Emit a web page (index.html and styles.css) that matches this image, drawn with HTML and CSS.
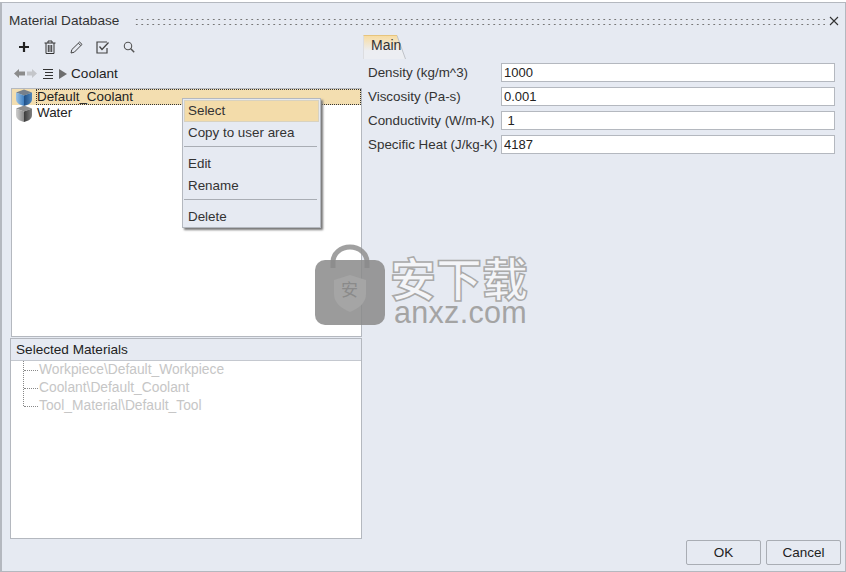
FILE: index.html
```html
<!DOCTYPE html>
<html lang="en">
<head>
  <meta charset="UTF-8" />
  <title>Material Database</title>
  <link rel="stylesheet" href="styles.css">
</head>
<body>
<div class="dialog">
  <div class="titlebar">
    <span class="title">Material Database</span>
    <span class="grip"></span>
    <svg class="close" width="10" height="10" viewBox="0 0 10 10"><path d="M1 1l8 8M9 1l-8 8" stroke="#333" stroke-width="1.1" fill="none"/></svg>
  </div>

  <div class="main">
    <div class="left">
      <div class="toolbar">
        <svg width="12" height="12" viewBox="0 0 12 12"><path d="M6 1v10M1 6h10" stroke="#222" stroke-width="2.2" fill="none"/></svg>
        <svg width="12" height="14" viewBox="0 0 12 14"><path d="M0.5 3h11M4 3V1h4v2M2 3v10.5h8V3M4.3 5v7M6 5v7M7.7 5v7" stroke="#333" stroke-width="1" fill="none"/></svg>
        <svg width="13" height="13" viewBox="0 0 13 13"><path d="M1 12l.8-3.4L9.6 1l2.4 2.4-7.7 7.8zM8.4 2.2l2.4 2.4" stroke="#444" stroke-width="1" fill="none"/></svg>
        <svg class="tool-check" width="14" height="13" viewBox="0 0 14 13"><path d="M11 7v5H1V1h10" stroke="#444" stroke-width="1.2" fill="none"/><path d="M3.5 5.5L6 8.5l6.5-7" stroke="#444" stroke-width="1.3" fill="none"/></svg>
        <svg width="12" height="12" viewBox="0 0 12 12"><circle cx="5" cy="5" r="3.7" stroke="#555" stroke-width="1.1" fill="none"/><path d="M7.8 7.8l3.4 3.4" stroke="#555" stroke-width="1.5"/></svg>
      </div>

      <div class="crumbs">
        <svg width="11" height="9" viewBox="0 0 11 9"><path d="M0 4.5L5 0v2.5h6v4H5V9z" fill="#8b8b8b"/></svg>
        <svg class="crumb-fwd" width="10" height="9" viewBox="0 0 10 9"><path d="M10 4.5L5 0v2.5H0v4h5V9z" fill="#c4c6ca"/></svg>
        <svg class="crumb-list" width="11" height="10" viewBox="0 0 11 10"><path d="M0 .5h10M2 3.5h8M2 6.5h8M0 9.5h10" stroke="#333" stroke-width="1" fill="none"/></svg>
        <svg class="crumb-next" width="8" height="10" viewBox="0 0 8 10"><path d="M0 0l8 5-8 5z" fill="#6e6e6e"/></svg>
        <span class="crumb-text">Coolant</span>
      </div>

      <div class="tree">
        <div class="tree-row row-active">
          <svg class="cube" width="18" height="17" viewBox="0 0 18 17">
            <defs>
              <linearGradient id="blueL" x1="0" y1="0" x2="1" y2="0"><stop offset="0" stop-color="#9cc3e6"/><stop offset="1" stop-color="#3f7fc0"/></linearGradient>
              <linearGradient id="blueR" x1="0" y1="0" x2="1" y2="0"><stop offset="0" stop-color="#1f4f86"/><stop offset="1" stop-color="#4f86bd"/></linearGradient>
            </defs>
            <path d="M1 3.5L9 .5l8 3-8 3z" fill="#76808c"/>
            <path d="M1 3.5l8 3V17C5 16 1 14 1 10z" fill="url(#blueL)"/>
            <path d="M17 3.5l-8 3V17c4-1 8-3 8-7z" fill="url(#blueR)"/>
          </svg>
          <span class="row-label selected">Default_Coolant</span>
        </div>
        <div class="tree-row">
          <svg class="cube" width="18" height="17" viewBox="0 0 18 17">
            <defs>
              <linearGradient id="grayL" x1="0" y1="0" x2="1" y2="0"><stop offset="0" stop-color="#cfcfcf"/><stop offset="1" stop-color="#8a8a8a"/></linearGradient>
              <linearGradient id="grayR" x1="0" y1="0" x2="1" y2="0"><stop offset="0" stop-color="#3a3a3a"/><stop offset="1" stop-color="#808080"/></linearGradient>
            </defs>
            <path d="M1 3.5L9 .5l8 3-8 3z" fill="#8e8e8e"/>
            <path d="M1 3.5l8 3V17C5 16 1 14 1 10z" fill="url(#grayL)"/>
            <path d="M17 3.5l-8 3V17c4-1 8-3 8-7z" fill="url(#grayR)"/>
          </svg>
          <span class="row-label">Water</span>
        </div>
      </div>

      <div class="selected-panel">
        <div class="panel-head">Selected Materials</div>
        <ul class="sel-list">
          <li>Workpiece\Default_Workpiece</li>
          <li>Coolant\Default_Coolant</li>
          <li>Tool_Material\Default_Tool</li>
        </ul>
      </div>
    </div>

    <div class="right">
      <div class="tabs">
        <span class="tab">
          <svg class="tab-shape" width="43" height="24" viewBox="0 0 43 24">
            <defs>
              <linearGradient id="tabFill" x1="0" y1="0" x2="0" y2="1"><stop offset="0" stop-color="#f8dca0"/><stop offset="0.65" stop-color="#eceef2"/></linearGradient>
            </defs>
            <path d="M.5 24V.5H34L42.5 24z" fill="url(#tabFill)"/>
            <path d="M.5 24V.5" stroke="#dcdde0" fill="none"/>
            <path d="M34 .5L42.5 24" stroke="#bfc2c8" fill="none"/>
            <path d="M.5 .5H34" stroke="#e6c47e" fill="none"/>
          </svg>
          <span class="tab-label">Main</span>
        </span>
      </div>
      <div class="form">
        <label class="form-row"><span>Density (kg/m^3)</span><input type="text" value="1000"></label>
        <label class="form-row"><span>Viscosity (Pa-s)</span><input type="text" value="0.001"></label>
        <label class="form-row"><span>Conductivity (W/m-K)</span><input type="text" value=" 1"></label>
        <label class="form-row"><span>Specific Heat (J/kg-K)</span><input type="text" value="4187"></label>
      </div>
    </div>
  </div>

  <div class="buttons">
    <button>OK</button>
    <button>Cancel</button>
  </div>
</div>

<div class="menu">
  <div class="menu-item active">Select</div>
  <div class="menu-item">Copy to user area</div>
  <div class="menu-sep"></div>
  <div class="menu-item">Edit</div>
  <div class="menu-item">Rename</div>
  <div class="menu-sep"></div>
  <div class="menu-item">Delete</div>
</div>

<div class="watermark">
  <svg width="72" height="82" viewBox="0 0 72 82">
    <path d="M19 24v-6a17 15 0 0 1 34 0v6" stroke="#8f8f8f" stroke-width="5" fill="none" opacity="0.85"/>
    <rect x="1" y="16" width="70" height="65" rx="10" fill="#8a8a8a" opacity="0.85"/>
    <path d="M36 31l16 5v14c0 9-7 14-16 18-9-4-16-9-16-18V36z" fill="#a5a5a5"/>
  </svg>
  <span class="wm-badge">安</span>
  <div class="wm-cn">安下载</div>
  <div class="wm-en">anxz.com</div>
</div>
</body>
</html>
```

FILE: styles.css
```css
html, body {
  margin: 0;
  padding: 0;
}
body {
  width: 846px;
  height: 572px;
  background-color: #fff;
  font-family: "Liberation Sans", Arial, sans-serif;
  font-size: 13.5px;
  color: #222;
  overflow: hidden;
  position: relative;
}
.dialog {
  box-sizing: border-box;
  width: 846px;
  height: 570px;
  margin-top: 2px;
  border-style: solid;
  border-color: #b4b8bf;
  border-width: 1px 1px 1px 2px;
  background-color: #e6eaf2;
  display: flex;
  flex-direction: column;
}
.titlebar {
  display: flex;
  align-items: center;
  height: 31px;
  padding: 4px 6px 0 7px;
  box-sizing: border-box;
}
.title {
  font-size: 13.6px;
  color: #333;
}
.grip {
  flex: 1;
  height: 8px;
  margin: 0 4px 0 15px;
  background-image: radial-gradient(circle, #777 0.7px, transparent 1.1px);
  background-size: 5.5px 5px;
}

.main {
  flex: 1;
  display: flex;
  min-height: 0;
}
.left {
  width: 351px;
  margin-left: 9px;
  display: flex;
  flex-direction: column;
}
.toolbar {
  display: flex;
  align-items: center;
  gap: 14px;
  height: 25px;
  padding-left: 7px;
  box-sizing: border-box;
  padding-top: 1px;
}
.tool-check {
  margin-left: -1px;
  margin-right: -1px;
}
.crumbs {
  display: flex;
  align-items: center;
  height: 29px;
  padding-left: 3px;
  box-sizing: border-box;
}
.crumb-fwd {
  margin-left: 2px;
}
.crumb-list {
  margin-left: 6px;
}
.crumb-next {
  margin-left: 5px;
}
.crumb-text {
  margin-left: 4px;
  font-size: 13.6px;
}
.tree {
  box-sizing: border-box;
  height: 249px;
  background-color: #fff;
  border: 1px solid #b4b8bf;
}
.tree-row {
  display: flex;
  align-items: center;
  height: 16px;
  padding-left: 3px;
}
.row-active {
  background-color: #f3deb0;
}
.cube {
  flex: none;
}
.row-label {
  margin-left: 4px;
  font-size: 13.4px;
  line-height: 14px;
}
.row-label.selected {
  flex: 1;
  border: 1px dotted #333;
  margin-left: 3px;
}
.selected-panel {
  box-sizing: border-box;
  margin-top: 1px;
  margin-left: -1px;
  width: 352px;
  height: 201px;
  background-color: #fff;
  border: 1px solid #b4b8bf;
}
.panel-head {
  height: 21px;
  line-height: 21px;
  padding-left: 5px;
  background-color: #e6eaf2;
  border-bottom: 1px solid #c4c8cf;
  font-size: 13.6px;
  color: #222;
}
.sel-list {
  list-style: none;
  margin: 0;
  padding: 0 0 0 12px;
  background-image: linear-gradient(#888 50%, transparent 50%);
  background-size: 1px 2px;
  background-repeat: repeat-y;
  background-position: 12px 0;
  height: 46px;
  color: #c6c6c6;
  font-size: 13.8px;
}
.sel-list li {
  height: 18px;
  line-height: 18px;
  padding-left: 16px;
  white-space: nowrap;
  position: relative;
}
.sel-list li::before {
  content: "";
  position: absolute;
  left: 1px;
  top: 9px;
  width: 14px;
  border-top: 1px dotted #888;
}

.right {
  flex: 1;
  margin-left: 1px;
  padding-right: 10px;
}
.tabs {
  height: 25px;
  display: flex;
  align-items: flex-end;
}
.tab {
  display: block;
  position: relative;
  width: 43px;
  height: 24px;
}
.tab-shape {
  display: block;
}
.tab-label {
  position: absolute;
  left: 8px;
  top: 2px;
  font-size: 14px;
  color: #333;
}
.form {
  padding: 4px 0 0 5px;
  display: flex;
  flex-direction: column;
  gap: 5px;
}
.form-row {
  display: flex;
  align-items: center;
  height: 19px;
  font-size: 13.4px;
  color: #333;
}
.form-row span {
  width: 133px;
  white-space: nowrap;
  flex: none;
}
.form-row input {
  box-sizing: border-box;
  flex: 1;
  min-width: 0;
  height: 19px;
  padding: 0 2px;
  border: 1px solid #b4b8bf;
  background-color: #fff;
  font-family: inherit;
  font-size: 13px;
  color: #222;
}

.buttons {
  display: flex;
  justify-content: flex-end;
  gap: 5px;
  height: 31px;
  padding-right: 4px;
}
.buttons button {
  box-sizing: border-box;
  width: 75px;
  height: 25px;
  background-color: #e6eaf2;
  border: 1px solid #a9adb4;
  border-radius: 2px;
  font-family: inherit;
  font-size: 13.5px;
  color: #222;
}

.menu {
  position: absolute;
  left: 182px;
  top: 98px;
  box-sizing: border-box;
  width: 139px;
  height: 130px;
  background-color: #e6eaf2;
  border: 1px solid #b4b8bf;
  box-shadow: 2px 2px 2px #777;
  padding: 1px;
}
.menu-item {
  height: 22px;
  line-height: 22px;
  padding-left: 4px;
  font-size: 13.4px;
  color: #333;
}
.menu-item.active {
  background-color: #f3dcaa;
  border: 1px solid #d8d2c0;
  box-sizing: border-box;
  padding-left: 3px;
  line-height: 20px;
}
.menu-sep {
  height: 1px;
  margin: 2px 2px 6px 0;
  background-color: #a9adb4;
}

.watermark {
  position: absolute;
  left: 314px;
  top: 244px;
  width: 220px;
  height: 84px;
}
.wm-badge {
  position: absolute;
  left: 27px;
  top: 35px;
  font-family: "Noto Sans CJK SC", sans-serif;
  font-size: 17px;
  line-height: 20px;
  color: #8a8a8a;
}
.wm-cn {
  position: absolute;
  left: 76px;
  top: 10px;
  font-family: "Noto Sans CJK SC", sans-serif;
  font-size: 46px;
  line-height: 44px;
  font-weight: 700;
  color: #f4f5f8;
  -webkit-text-stroke: 1.5px #aaa;
  white-space: nowrap;
}
.wm-en {
  position: absolute;
  left: 80px;
  top: 54px;
  font-size: 30.5px;
  line-height: 28px;
  color: #a4a4a4;
  white-space: nowrap;
  letter-spacing: 0.3px;
}
```
